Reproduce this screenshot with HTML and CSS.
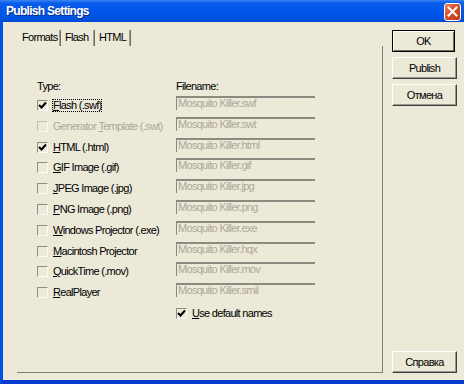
FILE: index.html
```html
<!DOCTYPE html>
<html>
<head>
<meta charset="utf-8">
<link rel="stylesheet" href="styles.css">
</head>
<body>
<div class="window">
  <div class="titlebar">
    <span class="title">Publish Settings</span>
    <div class="close"><svg width="11" height="11" viewBox="0 0 11 11"><path d="M1.5 1.5 L9.5 9.5 M9.5 1.5 L1.5 9.5" stroke="#fff" stroke-width="2" stroke-linecap="square"/></svg></div>
  </div>
  <div class="frame">
    <div class="left">
      <div class="tabs">
        <div class="tab t1 active">Formats</div>
        <div class="tab t2">Flash</div>
        <div class="tab t3">HTML</div>
      </div>
      <div class="panel">
        <div class="hdr-row"><span class="hdr">Type:</span><span class="hdr">Filename:</span></div>
        <div class="grid">
          <div class="lc"><span class="cb checked"><svg width="9" height="9" viewBox="0 0 9 9"><path d="M1 4 L3.5 6.5 L8 1.5" fill="none" stroke="#000" stroke-width="2"/></svg></span><span class="lbl focus"><u>F</u>lash (.swf)</span></div>
          <div class="inp">Mosquito Killer.swf</div>
          <div class="lc"><span class="cb dis"></span><span class="lbl disabled">Generator <u>T</u>emplate (.swt)</span></div>
          <div class="inp">Mosquito Killer.swt</div>
          <div class="lc"><span class="cb checked"><svg width="9" height="9" viewBox="0 0 9 9"><path d="M1 4 L3.5 6.5 L8 1.5" fill="none" stroke="#000" stroke-width="2"/></svg></span><span class="lbl"><u>H</u>TML (.html)</span></div>
          <div class="inp">Mosquito Killer.html</div>
          <div class="lc"><span class="cb"></span><span class="lbl"><u>G</u>IF Image (.gif)</span></div>
          <div class="inp">Mosquito Killer.gif</div>
          <div class="lc"><span class="cb"></span><span class="lbl"><u>J</u>PEG Image (.jpg)</span></div>
          <div class="inp">Mosquito Killer.jpg</div>
          <div class="lc"><span class="cb"></span><span class="lbl"><u>P</u>NG Image (.png)</span></div>
          <div class="inp">Mosquito Killer.png</div>
          <div class="lc"><span class="cb"></span><span class="lbl"><u>W</u>indows Projector (.exe)</span></div>
          <div class="inp">Mosquito Killer.exe</div>
          <div class="lc"><span class="cb"></span><span class="lbl"><u>M</u>acintosh Projector</span></div>
          <div class="inp">Mosquito Killer.hqx</div>
          <div class="lc"><span class="cb"></span><span class="lbl"><u>Q</u>uickTime (.mov)</span></div>
          <div class="inp">Mosquito Killer.mov</div>
          <div class="lc"><span class="cb"></span><span class="lbl"><u>R</u>ealPlayer</span></div>
          <div class="inp">Mosquito Killer.smil</div>
          <div class="lc"></div>
          <div class="lc"><span class="cb checked"><svg width="9" height="9" viewBox="0 0 9 9"><path d="M1 4 L3.5 6.5 L8 1.5" fill="none" stroke="#000" stroke-width="2"/></svg></span><span class="lbl"><u>U</u>se default names</span></div>
        </div>
      </div>
    </div>
    <div class="buttons">
      <div class="btn default">OK</div>
      <div class="btn">Publish</div>
      <div class="btn">Отмена</div>
      <div class="spacer"></div>
      <div class="btn">Справка</div>
    </div>
  </div>
</div>
</body>
</html>
```
FILE: styles.css
```css
html, body {
  margin: 0;
  padding: 0;
}
body {
  width: 464px;
  height: 384px;
  overflow: hidden;
  font-family: "Liberation Sans", Arial, sans-serif;
  font-size: 11px;
  letter-spacing: -0.7px;
  color: #000;
}
.window {
  width: 464px;
  height: 384px;
  display: flex;
  flex-direction: column;
  background: #ece9d8;
}
.titlebar {
  height: 22px;
  flex: none;
  background: linear-gradient(#3a86f4 0, #0a5deb 3px, #0057e8 50%, #0053e2 85%, #0046d2 100%);
  display: flex;
  align-items: center;
  padding-left: 6px;
  padding-right: 3px;
}
.title {
  color: #fff;
  font-weight: bold;
  font-size: 12px;
  letter-spacing: -0.7px;
  flex: 1;
  text-shadow: 1px 1px 0 #0a2c8a;
}
.close {
  width: 15px;
  height: 16px;
  border: 1px solid #fff;
  border-radius: 3px;
  background: linear-gradient(135deg, #e8805f 0, #d8502c 45%, #c03a18 100%);
  display: flex;
  align-items: center;
  justify-content: center;
  margin-top: 1px;
}
.frame {
  flex: 1;
  display: flex;
  border-left: 3px solid #0054e3;
  border-bottom: 4px solid #0a3bd0;
  padding: 8px 7px 7px 14px;
  gap: 9px;
}
.left {
  flex: 1;
  display: flex;
  flex-direction: column;
}
.tabs {
  display: flex;
  height: 16px;
  flex: none;
}
.tab {
  height: 16px;
  line-height: 15px;
  box-sizing: border-box;
  border-right: 1px solid #a09f98;
  box-shadow: 1px 0 0 #6e6d66;
  margin-right: 1px;
  padding-left: 4px;
}
.t1 { width: 43px; padding-left: 5px; }
.t2 { width: 33px; }
.t3 { width: 35px; }
.panel {
  flex: 1;
  border-right: 1px solid #807e76;
  border-bottom: 1px solid #807e76;
  padding: 34px 0 0 20px;
}
.hdr-row {
  display: flex;
  height: 16px;
}
.hdr {
  width: 139px;
  line-height: 13px;
}
.grid {
  display: grid;
  grid-template-columns: 139px 139px;
  grid-auto-rows: 20.8px;
}
.lc {
  display: flex;
  align-items: center;
  height: 11px;
  margin-top: 4px;
}
.cb {
  width: 11px;
  height: 11px;
  box-sizing: border-box;
  border-top: 1px solid #8f8d86;
  border-left: 1px solid #8f8d86;
  border-right: 1px solid #fbfaf6;
  border-bottom: 1px solid #fbfaf6;
  margin-right: 5px;
  display: flex;
  align-items: center;
  justify-content: center;
  flex: none;
}
.cb.dis {
  border-top-color: #c4c2b8;
  border-left-color: #c4c2b8;
}
.lbl {
  line-height: 11px;
  white-space: nowrap;
}
.lbl.disabled {
  color: #aca899;
}
.lbl.focus {
  outline: 1px dotted #000;
  outline-offset: 0;
}
.inp {
  height: 14px;
  box-sizing: border-box;
  border-top: 2px solid #8c8a80;
  border-left: 1px solid #8c8a80;
  color: #aca899;
  line-height: 11px;
  padding-left: 1px;
  white-space: nowrap;
}
.buttons {
  width: 65px;
  display: flex;
  flex-direction: column;
  gap: 5px;
}
.btn {
  height: 22px;
  box-sizing: border-box;
  border-top: 1px solid #fff;
  border-left: 1px solid #fff;
  border-right: 1px solid #404040;
  border-bottom: 1px solid #404040;
  box-shadow: inset -1px -1px 0 #9a988f;
  display: flex;
  align-items: center;
  justify-content: center;
}
.btn.default {
  width: 63px;
  border: 1px solid #000;
  box-shadow: inset 1px 1px 0 #fff, inset -1px -1px 0 #6e6d66;
}
.spacer {
  flex: 1;
}
```
